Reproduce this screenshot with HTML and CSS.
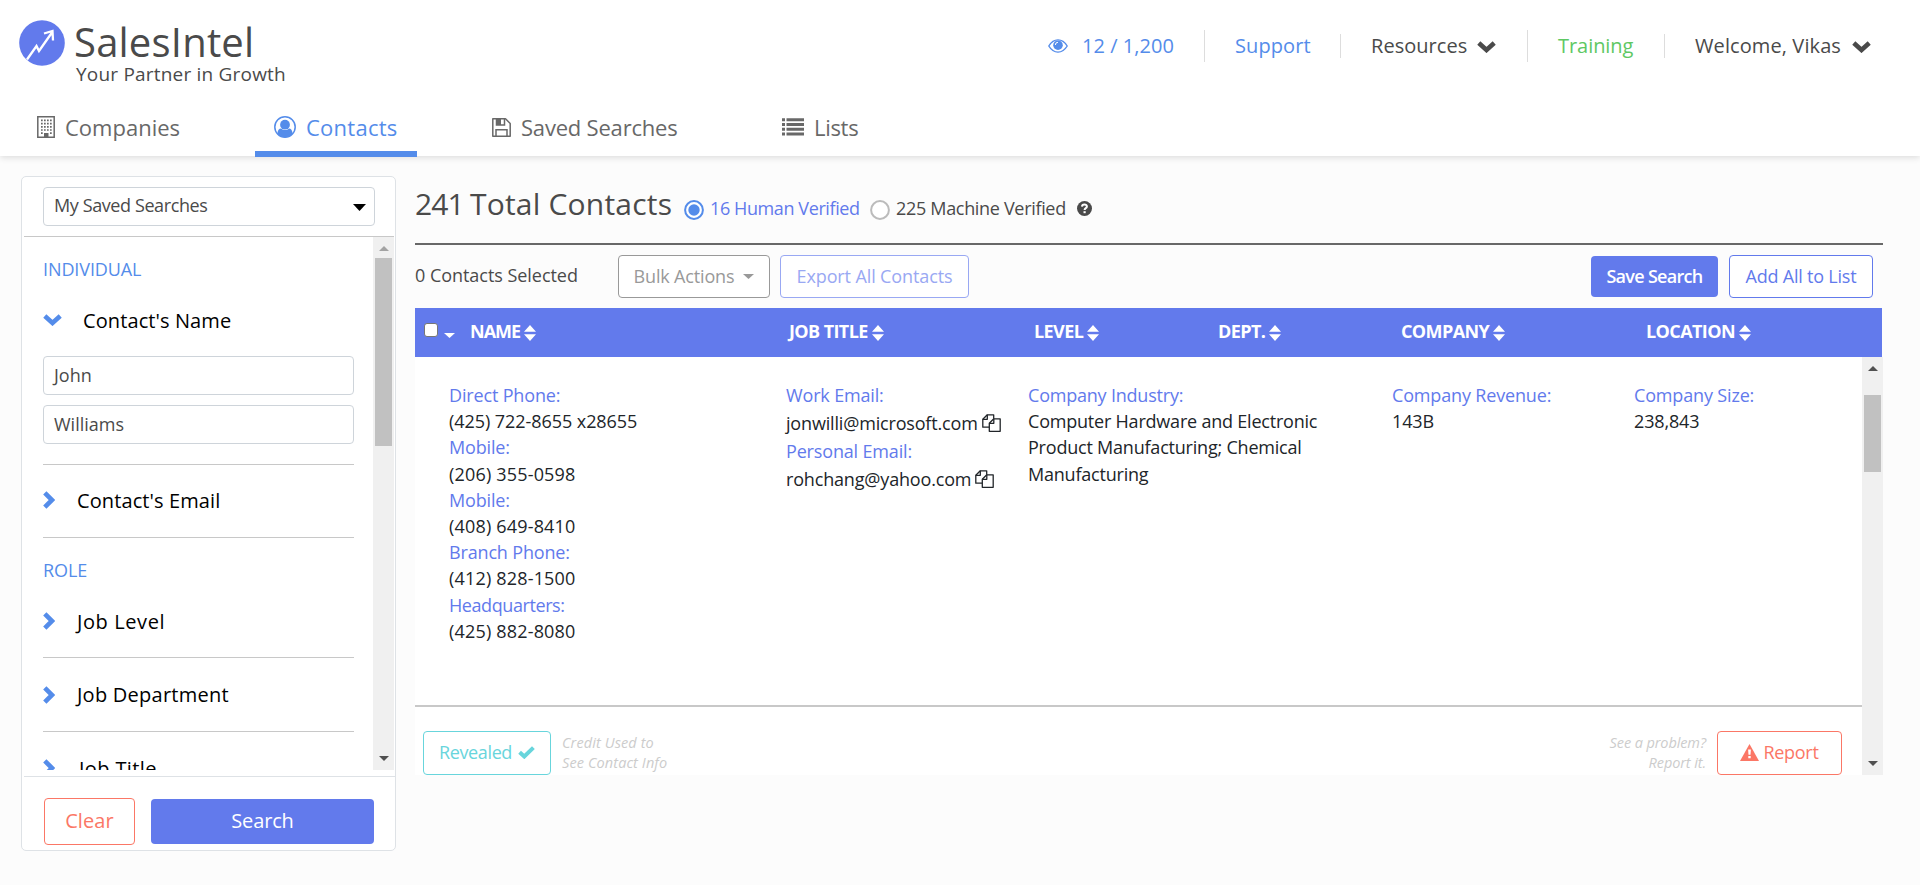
FILE: index.html
```html
<!DOCTYPE html>
<html lang="en">
<head>
<meta charset="utf-8">
<title>SalesIntel - Contacts</title>
<link rel="stylesheet" href="styles.css">
</head>
<body>
<svg width="0" height="0" class="sprite">
  <symbol id="sort" viewBox="0 0 12 16"><path d="M6 0l6 6.800H0zM6 16l6-6.800H0z" fill="currentColor"/></symbol>
  <symbol id="right" viewBox="0 0 12 18"><path d="M1.800 1.800 9 9l-7.200 7.200" fill="none" stroke="currentColor" stroke-width="4.600"/></symbol>
  <symbol id="down" viewBox="0 0 19 12"><path d="M1.800 2 9.500 9l7.700-7" fill="none" stroke="currentColor" stroke-width="4.600"/></symbol>
  <symbol id="copy" viewBox="0 0 19 18"><g fill="none" stroke="currentColor" stroke-width="1.300" stroke-linejoin="round"><path d="M7.300 13.200H.8V5.300L5.300.8h6.400v4"/><path d="M.8 5.300h4.500V.8"/><path d="M7.300 9.300v8h10.900V4.800h-6.400z"/><path d="M7.300 9.300h4.500V4.800"/></g></symbol>
</svg>

<header class="header">
  <div class="topbar">
    <a class="logo">
      <svg class="logo-mark" viewBox="0 0 46 46"><circle cx="23" cy="23" r="22.800" fill="#627aec"/><path d="M8 39.500 17.500 26l2.500 5L33 12.500M25 13.500l8.500-2.500.5 9.500" fill="none" stroke="#fff" stroke-width="2.300"/></svg>
      <span class="logo-text"><b class="brand">SalesIntel</b><span class="tagline">Your Partner in Growth</span></span>
    </a>
    <div class="utility">
      <a class="cell credits blue"><svg width="20" height="14" viewBox="0 0 20 14"><path d="M.8 7Q4.500.9 10 .9T19.200 7Q15.500 13.100 10 13.100T.8 7z" fill="none" stroke="currentColor" stroke-width="1.400"/><circle cx="10" cy="6.200" r="4.800" fill="currentColor"/><path d="M7.400 6A2.600 2.600 0 0 1 10 3.300" fill="none" stroke="#fff"/></svg><span>12 / 1,200</span></a>
      <i class="sep tall"></i><a class="cell support blue">Support</a>
      <i class="sep"></i><a class="cell resources">Resources<svg width="19" height="12"><use href="#down"/></svg></a>
      <i class="sep tall"></i><a class="cell training">Training</a>
      <i class="sep"></i><a class="cell welcome">Welcome, Vikas<svg width="19" height="12"><use href="#down"/></svg></a>
    </div>
  </div>
  <nav class="nav">
    <a class="tab companies"><svg width="18" height="22" viewBox="0 0 18 22"><path d="M.8.8h16.400v20.400H.8z" fill="none" stroke="currentColor" stroke-width="1.500"/><path d="M4 4.400h11M4 7.600h11M4 10.800h11M4 14h11" stroke="currentColor" stroke-width="1.700" stroke-dasharray="1.700 1.300"/><path d="M4 17.200h1.700M13 17.200h1.700" stroke="currentColor" stroke-width="1.700"/><path d="M7 17h4.500v4.500H7z" fill="currentColor"/></svg>Companies</a>
    <a class="tab contacts"><svg width="22" height="22" viewBox="0 0 22 22"><circle cx="11" cy="11" r="10.200" fill="none" stroke="currentColor" stroke-width="1.500"/><circle cx="11" cy="8.700" r="4.900" fill="currentColor"/><path d="M3.500 17.500c.2-3.500 1.500-5 3.500-5 2.500 2 5.500 2 8 0 2 0 3.300 1.500 3.500 5C16.500 20 14 21.200 11 21.200S5.500 20 3.500 17.500z" fill="currentColor"/></svg>Contacts</a>
    <a class="tab saved"><svg width="19" height="19" viewBox="0 0 19 19"><path d="M.8.8h12.700l4.700 4.700v12.700H.8z" fill="none" stroke="currentColor" stroke-width="1.500" stroke-linejoin="round"/><path d="M4 18v-6.200h11V18M4.500 1v6h8V1" fill="none" stroke="currentColor" stroke-width="1.500"/><path d="M4.500 1H9v6H4.500z" fill="currentColor"/></svg>Saved Searches</a>
    <a class="tab lists"><svg width="22" height="18" viewBox="0 0 22 18"><path d="M0 1.700h3M0 6.500h3M0 11.300h3M0 16.100h3M4.500 1.700H22M4.500 6.500H22M4.500 11.300H22M4.500 16.100H22" stroke="currentColor" stroke-width="3"/></svg>Lists</a>
  </nav>
</header>

<div class="page">
  <aside class="sidebar">
    <div class="saved-wrap"><div class="field select">My Saved Searches<svg width="13" height="7"><path d="M0 0h13L6.500 7z"/></svg></div></div>
    <div class="filter-scroll">
      <div class="filters">
        <h3>INDIVIDUAL</h3>
        <div class="filter open"><svg width="19" height="12"><use href="#down"/></svg><span>Contact's Name</span></div>
        <div class="inputs"><div class="field">John</div><div class="field">Williams</div></div>
        <div class="filter line email"><svg width="12" height="18"><use href="#right"/></svg><span>Contact's Email</span></div>
        <h3 class="line">ROLE</h3>
        <div class="filter level"><svg width="12" height="18"><use href="#right"/></svg><span>Job Level</span></div>
        <div class="filter line department"><svg width="12" height="18"><use href="#right"/></svg><span>Job Department</span></div>
        <div class="filter line title"><svg width="12" height="18"><use href="#right"/></svg><span>Job Title</span></div>
      </div>
      <div class="scrollbar"><svg class="arrow" width="10" height="5"><path d="M5 0l5 5H0z" fill="#a3a3a3"/></svg><i class="thumb"></i><svg class="arrow" width="10" height="5"><path d="M0 0h10L5 5z" fill="#505050"/></svg></div>
    </div>
    <div class="sidebar-actions"><a class="btn clear">Clear</a><a class="btn search">Search</a></div>
  </aside>

  <main class="main">
    <div class="summary">
      <h1><span class="total">241</span>Total Contacts</h1>
      <svg class="radio" width="20" height="20"><circle cx="10" cy="10" r="8.900" fill="#fff" stroke="#548cea" stroke-width="2"/><circle cx="10" cy="10" r="5.700" fill="#548cea"/></svg>
      <span class="human">16 Human Verified</span>
      <svg class="radio" width="20" height="20"><circle cx="10" cy="10" r="8.900" fill="#fff" stroke="#bbb" stroke-width="2"/></svg>
      <span class="machine">225 Machine Verified</span>
      <svg class="help" width="15" height="15" viewBox="0 0 15 15"><circle cx="7.500" cy="7.500" r="7.500" fill="#4a4a4a"/><path d="M5 5.600C5.100 2.600 10 2.700 9.900 5.600 9.800 7.300 7.600 7 7.600 9" fill="none" stroke="#fff" stroke-width="2"/><path d="M6.500 10.200h2.200v2H6.500z" fill="#fff"/></svg>
    </div>
    <div class="toolbar">
      <span class="selected">0 Contacts Selected</span>
      <a class="btn bulk">Bulk Actions<svg width="11" height="5"><path d="M0 0h11L5.500 5z" fill="currentColor"/></svg></a>
      <a class="btn export">Export All Contacts</a>
      <a class="btn save">Save Search</a>
      <a class="btn add">Add All to List</a>
    </div>
    <div class="thead">
      <span class="check"><i></i><svg width="11" height="5"><path d="M0 0h11L5.500 5z" fill="#fff"/></svg></span>
      <span class="name">NAME<svg width="12" height="16"><use href="#sort"/></svg></span>
      <span>JOB TITLE<svg width="12" height="16"><use href="#sort"/></svg></span>
      <span>LEVEL<svg width="12" height="16"><use href="#sort"/></svg></span>
      <span>DEPT.<svg width="12" height="16"><use href="#sort"/></svg></span>
      <span>COMPANY<svg width="12" height="16"><use href="#sort"/></svg></span>
      <span>LOCATION<svg width="12" height="16"><use href="#sort"/></svg></span>
    </div>
    <div class="tbody">
      <div class="rows">
        <div class="details">
          <dl class="phones">
            <dt>Direct Phone:</dt><dd class="extended">(425) 722-8655 x28655</dd>
            <dt>Mobile:</dt><dd>(206) 355-0598</dd>
            <dt>Mobile:</dt><dd>(408) 649-8410</dd>
            <dt>Branch Phone:</dt><dd>(412) 828-1500</dd>
            <dt class="hq">Headquarters:</dt><dd>(425) 882-8080</dd>
          </dl>
          <dl class="emails">
            <dt>Work Email:</dt><dd>jonwilli@microsoft.com<svg width="19" height="18"><use href="#copy"/></svg></dd>
            <dt>Personal Email:</dt><dd>rohchang@yahoo.com<svg width="19" height="18"><use href="#copy"/></svg></dd>
          </dl>
          <dl class="industry"><dt>Company Industry:</dt><dd>Computer Hardware and Electronic<br>Product Manufacturing; Chemical<br>Manufacturing</dd></dl>
          <dl><dt>Company Revenue:</dt><dd>143B</dd></dl>
          <dl><dt>Company Size:</dt><dd>238,843</dd></dl>
        </div>
        <div class="row-footer">
          <a class="btn revealed">Revealed<svg width="17" height="13" viewBox="0 0 17 13"><path d="M1.600 6.200 6.300 10.500 15.400 1.600" fill="none" stroke="currentColor" stroke-width="4"/></svg></a>
          <p>Credit Used to<br>See Contact Info</p>
          <p class="problem">See a problem?<br>Report it.</p>
          <a class="btn report"><svg width="19" height="17" viewBox="0 0 19 17"><path d="M9.500 0 19 17H0z" fill="currentColor"/><path d="M8.100 5.500h2.800l-.4 5.300H8.500zM8.300 12h2.400v2.300H8.300z" fill="#fff"/></svg>Report</a>
        </div>
      </div>
      <div class="scrollbar"><svg class="arrow" width="10" height="5"><path d="M5 0l5 5H0z" fill="#505050"/></svg><i class="thumb"></i><svg class="arrow" width="10" height="5"><path d="M0 0h10L5 5z" fill="#505050"/></svg></div>
    </div>
  </main>
</div>
</body>
</html>
```
FILE: styles.css
```css
* { box-sizing: border-box; }
body { margin: 0; height: 885px; overflow: hidden; background: #fcfcfc; color: #4a4a4a; font: 18px "Open Sans", sans-serif; letter-spacing: -0.16px; }
h1, h3, p, dl, dd, dt { margin: 0; font-weight: 400; }
svg { display: block; flex: none; }
.sprite { position: absolute; }

/* Header */
.header { position: relative; height: 156px; background: #fff; box-shadow: 0 2px 6px rgba(0, 0, 0, .12); }
.topbar { display: flex; justify-content: space-between; height: 100px; }
.logo { display: flex; padding: 20px 0 0 19px; }
.logo-mark { width: 46px; height: 46px; }
.logo-text { display: flex; flex-direction: column; padding-left: 9px; }
.brand { font-size: 40px; line-height: 44px; font-weight: 500; letter-spacing: .2px; }
.tagline { padding-left: 2px; font-size: 19px; line-height: 21px; letter-spacing: .2px; }
.utility { display: flex; align-items: center; height: 92px; font-size: 20px; letter-spacing: .04px; }
.cell { display: flex; align-items: center; height: 90px; padding-bottom: 1px; white-space: nowrap; }
.blue { color: #548cea; }
.sep { width: 1px; height: 24px; background: #ddd; }
.sep.tall { height: 32px; }
.credits { width: 156px; gap: 14px; }
.support { width: 135px; padding-left: 30px; letter-spacing: .1px; }
.resources { width: 186px; padding-left: 30px; gap: 10px; }
.resources svg, .welcome svg { margin-top: 3px; }
.training { width: 136px; padding-left: 30px; color: #5ec863; letter-spacing: -.05px; }
.welcome { width: 255px; padding-left: 30px; gap: 11px; letter-spacing: .1px; }
.nav { display: grid; grid-template-columns: 255px 162px 365px 1fr; height: 57px; font-size: 22px; color: #686868; }
.tab { display: flex; align-items: center; gap: 10px; padding-bottom: 4px; letter-spacing: 0; }
.tab svg { margin-top: 1px; }
.companies { padding-left: 37px; }
.contacts { padding: 2px 0 0 19px; color: #548cea; border-bottom: 6px solid #548cea; letter-spacing: .25px; }
.saved { padding-left: 75px; letter-spacing: -.2px; }
.lists { letter-spacing: -.3px; }

/* Layout */
.page { display: flex; align-items: flex-start; padding: 20px 0 0 21px; }

/* Sidebar */
.sidebar { width: 375px; height: 675px; margin-right: 19px; padding-left: 2px; background: #fff; border: 1px solid #dee2e6; border-radius: 5px; }
.saved-wrap { height: 60px; margin-right: 1px; padding: 10px 19px 0; border-bottom: 1px solid #c8c8c8; }
.field { display: flex; align-items: center; justify-content: space-between; height: 39px; padding: 0 8px 2px 10px; border: 1px solid #ced4da; border-radius: 4px; background: #fff; letter-spacing: 0; }
.select { padding-bottom: 3px; letter-spacing: -.4px; }
.select svg { fill: #000; margin-top: 4px; }
.filter-scroll { display: flex; height: 533px; overflow: hidden; }
.filters { width: 349px; padding: 0 19px; }
.filters h3 { height: 64px; line-height: 64px; font-size: 18px; color: #548cea; letter-spacing: -.1px; }
.line { border-top: 1px solid #c8c8c8; }
.filters h3.line { height: 65px; }
.filter { display: flex; align-items: center; gap: 22px; color: #000; font-size: 20px; letter-spacing: .1px; }
.filter svg { color: #548cea; }
.open { height: 38px; gap: 21px; }
.inputs { display: flex; flex-direction: column; gap: 10px; padding: 17px 0 20px; }
.email { height: 73px; padding-bottom: 2px; }
.level { height: 38px; margin-bottom: 17px; letter-spacing: .6px; }
.department { height: 74px; letter-spacing: .25px; }
.title { height: 73px; letter-spacing: .4px; }
.title span { padding-left: 2px; }
.scrollbar { display: flex; flex-direction: column; align-items: center; width: 21px; background: #f0f0f0; padding: 9px 0; }
.thumb { width: 17px; height: 188px; margin: 7px 0 auto; background: #c1c1c1; }
.sidebar-actions { display: flex; align-items: center; gap: 16px; height: 80px; margin-top: 6px; padding: 9px 20px 0; border-top: 1px solid #dee2e6; }

/* Buttons */
.btn { display: flex; align-items: center; justify-content: center; flex: none; height: 43px; padding-bottom: 2px; border: 1px solid; border-radius: 4px; background: #fff; white-space: nowrap; }
.clear { width: 91px; height: 47px; color: #fb7766; font-size: 20px; font-weight: 500; letter-spacing: .1px; }
.search { width: 223px; height: 45px; border: 0; background: #627aec; color: #fff; font-size: 20px; font-weight: 500; }

/* Results */
.main { width: 1468px; }
.summary { display: flex; align-items: flex-start; height: 69px; padding-top: 7px; border-bottom: 2px solid #686868; line-height: 50px; white-space: nowrap; }
.summary h1 { display: flex; width: 269px; font-size: 30px; font-weight: 500; line-height: 42px; letter-spacing: .2px; }
.total { width: 55px; letter-spacing: -.9px; }
.radio { margin-top: 17px; }
.human { width: 166px; padding-left: 6px; color: #627aec; letter-spacing: -.4px; }
.machine { width: 187px; padding-left: 6px; letter-spacing: -.32px; }
.help { margin-top: 18px; }
.toolbar { display: flex; align-items: center; height: 63px; }
.selected { width: 203px; padding-bottom: 4px; letter-spacing: -.04px; }
.bulk { width: 152px; margin-right: 10px; gap: 9px; color: #999; }
.bulk svg { margin-top: 2px; }
.export { width: 189px; color: #99a8f3; letter-spacing: -.12px; }
.save { width: 127px; height: 41px; margin: 0 11px 0 auto; border: 0; background: #627aec; color: #fff; font-weight: 600; letter-spacing: -.7px; }
.add { width: 144px; margin-right: 10px; color: #627aec; letter-spacing: -.22px; }
.thead { display: grid; grid-template-columns: 55px 319px 245px 184px 183px 245px 1fr; width: 1467px; height: 49px; padding-bottom: 3px; background: #627aec; color: #fff; font-size: 18px; font-weight: 700; letter-spacing: -.6px; }
.thead span { display: flex; align-items: center; gap: 4px; }
.thead span svg { margin-top: 3px; }
.thead .name { letter-spacing: -1px; }
.check { padding-left: 9px; }
.check i { width: 14px; height: 14px; border: 1px solid #767676; border-radius: 3px; background: #fff; margin-bottom: 2px; }
.thead .check svg { margin: 8px 0 0 2px; }
.tbody { display: flex; height: 418px; overflow: hidden; }
.rows { width: 1447px; background: #fff; }
.details { display: grid; grid-template-columns: 337px 242px 364px 242px 1fr; height: 350px; padding: 25px 0 0 34px; border-bottom: 2px solid #c8c8c8; line-height: 26.2px; color: #212529; white-space: nowrap; }
.details dt { color: #627aec; }
.phones dd { letter-spacing: .18px; }
.phones .extended { letter-spacing: -.06px; }
.phones .hq { letter-spacing: -.42px; }
.industry { letter-spacing: -.21px; }
.emails dd { display: flex; align-items: center; gap: 4px; height: 29.8px; letter-spacing: -.17px; }
.emails svg { margin-top: -1px; }
.tbody .thumb { height: 77px; margin-top: 24px; }
.row-footer { display: flex; gap: 11px; padding: 24px 20px 0 8px; }
.row-footer p { font-size: 14.5px; font-style: italic; line-height: 20px; padding-top: 2px; color: #ccc; letter-spacing: .1px; }
.row-footer .problem { margin-left: auto; text-align: right; letter-spacing: -.1px; }
.row-footer .btn { height: 44px; }
.revealed { width: 128px; gap: 6px; color: #68d5dc; letter-spacing: -.37px; }
.report { width: 125px; gap: 4px; color: #fb7766; letter-spacing: -.3px; }
```
